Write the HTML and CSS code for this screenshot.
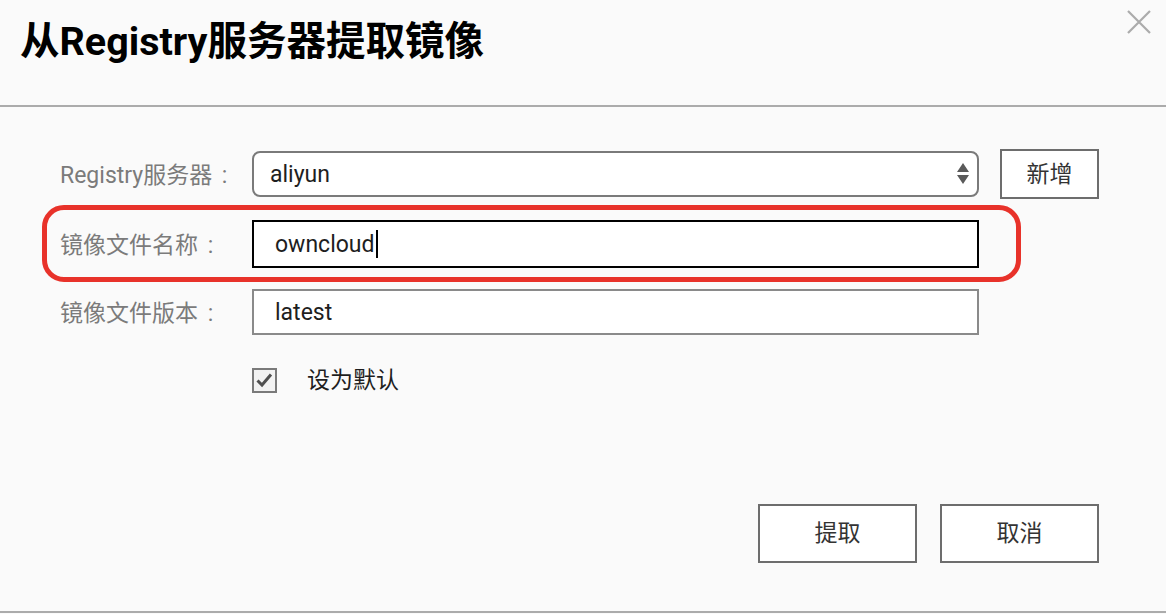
FILE: index.html
```html
<!DOCTYPE html>
<html lang="zh-CN">
<head>
<meta charset="utf-8">
<title>从Registry服务器提取镜像</title>
<link rel="stylesheet" href="styles.css">
</head>
<body>
<div class="dialog">
  <header class="head">
    <h1 class="title">从Registry服务器提取镜像</h1>
    <button class="close" aria-label="关闭">
      <svg width="24" height="24" viewBox="0 0 24 24"><path d="M1 1 L23 23 M23 1 L1 23" stroke="#ababab" stroke-width="2.2" fill="none"/></svg>
    </button>
  </header>
  <div class="body">
    <div class="row r1">
      <label class="label">Registry服务器&nbsp;:</label>
      <div class="field select">
        <span class="value">aliyun</span>
        <svg class="arrows" width="12" height="22" viewBox="0 0 12 22"><path d="M6 0 L12 9 L0 9 Z M0 12 L12 12 L6 21 Z" fill="#5a5a5a"/></svg>
      </div>
      <button class="btn add">新增</button>
    </div>
    <div class="row r2">
      <div class="highlight"></div>
      <label class="label">镜像文件名称&nbsp;:</label>
      <div class="field input active"><span class="value">owncloud</span><span class="caret"></span></div>
    </div>
    <div class="row r3">
      <label class="label">镜像文件版本&nbsp;:</label>
      <div class="field input"><span class="value">latest</span></div>
    </div>
    <div class="check-row">
      <span class="checkbox">
        <svg width="21" height="21" viewBox="0 0 21 21"><path d="M3.5 10.5 L8 15 L17 4.5" stroke="#4f4f4f" stroke-width="3" fill="none"/></svg>
      </span>
      <span class="check-label">设为默认</span>
    </div>
  </div>
  <footer class="actions">
    <button class="btn big">提取</button>
    <button class="btn big">取消</button>
  </footer>
</div>
</body>
</html>
```
FILE: styles.css
```css
* { box-sizing: border-box; }
html, body { margin: 0; padding: 0; }
body {
  width: 1166px;
  height: 614px;
  background: #fafafa;
  font-family: Roboto, "Noto Sans CJK SC", sans-serif;
  overflow: hidden;
}
.dialog {
  position: relative;
  width: 1166px;
  height: 613px;
  border-bottom: 2px solid #ababab;
  display: flex;
  flex-direction: column;
}
.head {
  position: relative;
  height: 107px;
  border-bottom: 2px solid #ababab;
  padding: 18px 0 0 20px;
}
.title {
  margin: 0;
  font-size: 39.5px;
  line-height: 48px;
  font-weight: 700;
  color: #000;
}
.close {
  position: absolute;
  top: 10px;
  right: 15px;
  padding: 0;
  border: 0;
  background: none;
  width: 24px;
  height: 24px;
}
.close svg { display: block; }
.body {
  padding: 42px 0 0 60px;
}
.row {
  display: flex;
  align-items: center;
}
.r1 { height: 50px; }
.r2 { height: 48px; margin-top: 21px; position: relative; }
.r3 { height: 46px; margin-top: 21px; }
.label {
  width: 192px;
  font-size: 23px;
  color: #7b7b7b;
  padding-bottom: 3px;
  word-spacing: 4px;
}
.field {
  width: 727px;
  background: #fff;
  display: flex;
  align-items: center;
  font-size: 23px;
  color: #1e1e1e;
}
.select {
  height: 46px;
  border: 2px solid #7a7a7a;
  border-radius: 8px;
  padding: 0 8px 0 16px;
  justify-content: space-between;
}
.input {
  height: 46px;
  border: 2px solid #8a8a8a;
  padding-left: 21px;
}
.input.active {
  height: 48px;
  border-color: #000;
}
.caret {
  display: inline-block;
  width: 2px;
  height: 28px;
  background: #000;
  margin-left: 1px;
}
.highlight {
  position: absolute;
  left: -18px;
  top: -15px;
  width: 979px;
  height: 77px;
  border: 5px solid #e8322a;
  border-radius: 22px;
  pointer-events: none;
}
.btn {
  font-family: Roboto, "Noto Sans CJK SC", sans-serif;
  background: #fff;
  border: 2px solid #6d6d6d;
  color: #333;
  font-size: 23px;
  padding: 0 0 5px 0;
}
.add {
  width: 99px;
  height: 50px;
  margin-left: 21px;
}
.check-row {
  display: flex;
  align-items: center;
  margin-top: 33px;
  padding-left: 192px;
  height: 25px;
}
.checkbox {
  width: 25px;
  height: 25px;
  border: 2px solid #7a7a7a;
  background: #f2f2f2;
  display: flex;
  align-items: center;
  justify-content: center;
}
.checkbox svg { display: block; }
.check-label {
  margin-left: 30px;
  font-size: 23px;
  color: #1e1e1e;
  padding-bottom: 5px;
}
.actions {
  margin-top: auto;
  display: flex;
  justify-content: flex-end;
  gap: 23px;
  padding: 0 67px 48px 0;
}
.big {
  width: 159px;
  height: 59px;
}
```
